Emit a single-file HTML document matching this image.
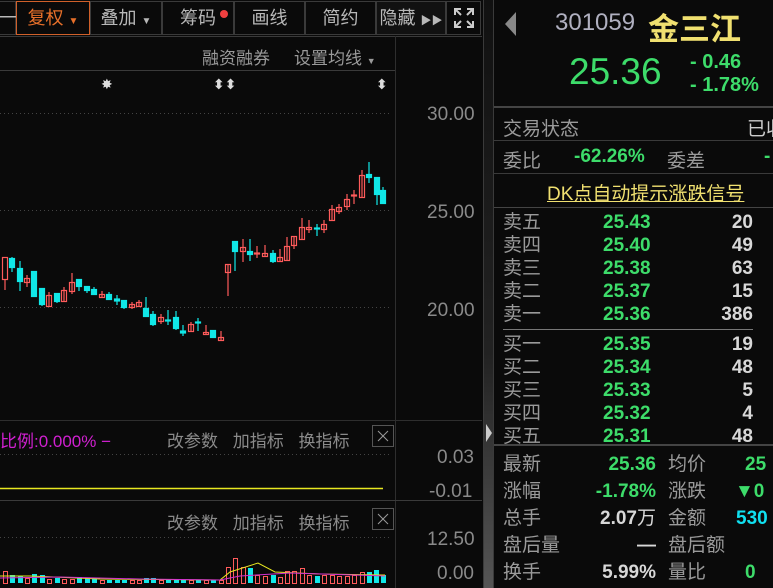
<!DOCTYPE html>
<html><head><meta charset="utf-8"><style>
*{margin:0;padding:0;box-sizing:border-box}
body{width:773px;height:588px;background:#0a0a0a;overflow:hidden;position:relative;font-family:"Liberation Sans","Noto Sans CJK SC",sans-serif;color:#a0a0a0}
.a{position:absolute;white-space:nowrap}
.tb{position:absolute;top:1px;height:34px;border:1px solid #3a3a3a;font-size:18px;color:#b8b8b8;text-align:center;line-height:33px}
.g{color:#3ddc6a;font-weight:bold}
.w{color:#d8d8d8;font-weight:bold}
.lbl{font-size:19px;color:#9a9a9a}
.hl{position:absolute;height:1px;background:#3a3a3a}
</style></head><body>
<div class="tb" style="left:-2px;width:18px">一</div>
<div class="tb" style="left:16px;width:74px;border-color:#d0602a;color:#e8702a">复权 <span style="font-size:10px">▼</span></div>
<div class="tb" style="left:90px;width:72px">叠加 <span style="font-size:10px">▼</span></div>
<div class="tb" style="left:162px;width:72px">筹码<span style="position:absolute;left:57px;top:8px;width:8px;height:8px;border-radius:50%;background:#f04040"></span></div>
<div class="tb" style="left:234px;width:71px">画线</div>
<div class="tb" style="left:305px;width:71px">简约</div>
<div class="tb" style="left:376px;width:70px;background:#111">隐藏 <span style="font-size:11px">▶▶</span></div>
<div class="tb" style="left:446px;width:35px">
<svg width="24" height="24" style="margin-top:4px" viewBox="0 0 24 24" fill="none" stroke="#ccc" stroke-width="2"><path d="M3 9V3h6M3 3l6 6M21 9V3h-6M21 3l-6 6M3 15v6h6M3 21l6-6M21 15v6h-6M21 21l-6-6"/></svg></div>
<div class="hl" style="left:0;top:36px;width:482px"></div>
<div class="a" style="left:202px;top:44px;font-size:17px;color:#9a9a9a">融资融券</div>
<div class="a" style="left:294px;top:44px;font-size:17px;color:#9a9a9a">设置均线 <span style="font-size:9px">▼</span></div>
<div class="hl" style="left:0;top:70px;width:395px"></div>
<div class="a" style="left:395px;top:36px;width:1px;height:552px;background:#2e2e2e"></div>
<div class="a" style="left:483px;top:0;width:11px;height:588px;background:linear-gradient(#111,#222 60%,#555);border-left:1px solid #3a3a3a;border-right:1px solid #3a3a3a"></div>
<div class="a" style="left:486px;top:424px;width:0;height:0;border-top:9px solid transparent;border-bottom:9px solid transparent;border-left:6px solid #ccc"></div>
<div class="a" style="left:427px;top:104px;font-size:19px;color:#8a8a8a">30.00</div>
<div class="a" style="left:427px;top:202px;font-size:19px;color:#8a8a8a">25.00</div>
<div class="a" style="left:427px;top:300px;font-size:19px;color:#8a8a8a">20.00</div>
<svg class="a" style="left:0;top:0" width="483" height="588">
<g stroke="#444" stroke-dasharray="1 3"><line x1="0" y1="113.5" x2="392" y2="113.5"/><line x1="0" y1="210.5" x2="392" y2="210.5"/><line x1="0" y1="307.5" x2="392" y2="307.5"/><line x1="0" y1="454.5" x2="392" y2="454.5"/><line x1="0" y1="537.5" x2="392" y2="537.5"/></g>
<g fill="#ddd" font-size="14" font-family="DejaVu Sans" font-weight="bold"><text x="101" y="89">✸</text><text x="213" y="89">⬍⬍</text><text x="376" y="89">⬍</text></g>
<g stroke="#ff5b5b" fill="none" stroke-width="1.2">
<path d="M5 279v11M27 275v12M49 292v14M64 287v14M72 273v21M102 291v6M132 302v7M139 300v7M161 314v10M191 322v9M206 325v9M221 331v10M228 264v32M243 239v23M257 246v12M265 245v11M280 249v12M287 237v23M294 236v13M302 218v21M309 220v13M324 220v13M332 205v15M339 204v10M347 194v16M354 190v14M362 170v28"/>
<rect x="2.5" y="257.5" width="5" height="22"/><rect x="24.5" y="278.5" width="5" height="4"/><rect x="46.5" y="295.5" width="5" height="11"/><rect x="61.5" y="290.5" width="5" height="11"/><rect x="69.5" y="282.5" width="5" height="9"/><rect x="99.5" y="294.5" width="5" height="3"/><rect x="129.5" y="304.5" width="5" height="3"/><rect x="136.5" y="302.5" width="5" height="4"/><rect x="158.5" y="317.5" width="5" height="4"/><rect x="188.5" y="324.5" width="5" height="7"/><rect x="203.5" y="332.5" width="5" height="2"/><rect x="218.5" y="337.5" width="5" height="3"/><rect x="225.5" y="264.5" width="5" height="8"/><rect x="240.5" y="247.5" width="5" height="4"/><rect x="254.5" y="253" width="5" height="1"/><rect x="262.5" y="253.5" width="5" height="3"/><rect x="277.5" y="257.5" width="5" height="4"/><rect x="284.5" y="246.5" width="5" height="14"/><rect x="291.5" y="236.5" width="5" height="9"/><rect x="299.5" y="227.5" width="5" height="12"/><rect x="306.5" y="227.5" width="5" height="2"/><rect x="321.5" y="224.5" width="5" height="5"/><rect x="329.5" y="209.5" width="5" height="11"/><rect x="336.5" y="207.5" width="5" height="4"/><rect x="344.5" y="199.5" width="5" height="7"/><rect x="351.5" y="195" width="5" height="1"/><rect x="359.5" y="175.5" width="5" height="22"/>
</g>
<g stroke="#10e8e8" fill="#10e8e8" stroke-width="1.2">
<path d="M12 257v15M20 261v30M42 288v18M57 293v10M79 279v12M87 286v7M94 287v8M109 292v8M117 295v10M124 300v9M146 297v20M153 311v15M168 310v15M176 311v19M183 325v11M198 318v13M213 330v8M235 241v30M250 239v22M273 250v13M317 224v12M369 162v21M377 177v28M383 187v16"/>
<rect x="9.5" y="258.5" width="5" height="9"/><rect x="17.5" y="268.5" width="5" height="13"/><rect x="31.5" y="271.5" width="5" height="25"/><rect x="39.5" y="288.5" width="5" height="16"/><rect x="54.5" y="293.5" width="5" height="8"/><rect x="76.5" y="279.5" width="5" height="7"/><rect x="84.5" y="286.5" width="5" height="4"/><rect x="91.5" y="289.5" width="5" height="5"/><rect x="106.5" y="294.5" width="5" height="5"/><rect x="114.5" y="299" width="5" height="2"/><rect x="121.5" y="300.5" width="5" height="7"/><rect x="143.5" y="308.5" width="5" height="8"/><rect x="150.5" y="314.5" width="5" height="10"/><rect x="165.5" y="320" width="5" height="1"/><rect x="173.5" y="317.5" width="5" height="11"/><rect x="180.5" y="331" width="5" height="2"/><rect x="195.5" y="322" width="5" height="1"/><rect x="210.5" y="330.5" width="5" height="7"/><rect x="232.5" y="241.5" width="5" height="10"/><rect x="247.5" y="251.5" width="5" height="3"/><rect x="270.5" y="253.5" width="5" height="8"/><rect x="314.5" y="228" width="5" height="1"/><rect x="366.5" y="174.5" width="5" height="3"/><rect x="374.5" y="177.5" width="5" height="17"/><rect x="380.5" y="190.5" width="5" height="13"/>
</g>
<line x1="0" y1="420.5" x2="482" y2="420.5" stroke="#2e2e2e"/>
<line x1="0" y1="488.5" x2="383" y2="488.5" stroke="#e8e820" stroke-width="1.5"/>
<line x1="0" y1="500.5" x2="482" y2="500.5" stroke="#3a3a3a"/>
<rect x="372.5" y="425.5" width="21" height="21" fill="none" stroke="#555"/><path d="M378 431l10 10M388 431l-10 10" stroke="#999"/>
<rect x="372.5" y="508.5" width="21" height="21" fill="none" stroke="#555"/><path d="M378 514l10 10M388 514l-10 10" stroke="#999"/>
<g fill="none" stroke="#ff5b5b"><rect x="3.5" y="571.5" width="4" height="12"/><rect x="25.5" y="578.5" width="4" height="5"/><rect x="47.5" y="579.5" width="4" height="4"/><rect x="62.5" y="579.5" width="4" height="4"/><rect x="70.5" y="579.5" width="4" height="4"/><rect x="100.5" y="580.5" width="4" height="3"/><rect x="130.5" y="580.5" width="4" height="3"/><rect x="137.5" y="580.5" width="4" height="3"/><rect x="159.5" y="580.5" width="4" height="3"/><rect x="189.5" y="580.5" width="4" height="3"/><rect x="204.5" y="580.5" width="4" height="3"/><rect x="219.5" y="580.5" width="4" height="3"/><rect x="226.5" y="567.5" width="4" height="16"/><rect x="233.5" y="558.5" width="4" height="25"/><rect x="241.5" y="567.5" width="4" height="16"/><rect x="255.5" y="575.5" width="4" height="8"/><rect x="263.5" y="576.5" width="4" height="7"/><rect x="278.5" y="577.5" width="4" height="6"/><rect x="285.5" y="571.5" width="4" height="12"/><rect x="292.5" y="571.5" width="4" height="12"/><rect x="300.5" y="568.5" width="4" height="15"/><rect x="307.5" y="575.5" width="4" height="8"/><rect x="322.5" y="575.5" width="4" height="8"/><rect x="330.5" y="575.5" width="4" height="8"/><rect x="337.5" y="576.5" width="4" height="7"/><rect x="345.5" y="576.5" width="4" height="7"/><rect x="352.5" y="575.5" width="4" height="8"/><rect x="360.5" y="572.5" width="4" height="11"/></g>
<g fill="#10e8e8"><rect x="10" y="575" width="5" height="8"/><rect x="18" y="576" width="5" height="7"/><rect x="32" y="574" width="5" height="9"/><rect x="40" y="575" width="5" height="8"/><rect x="55" y="578" width="5" height="5"/><rect x="77" y="577" width="5" height="6"/><rect x="85" y="578" width="5" height="5"/><rect x="92" y="578" width="5" height="5"/><rect x="107" y="580" width="5" height="3"/><rect x="115" y="580" width="5" height="3"/><rect x="122" y="580" width="5" height="3"/><rect x="144" y="578" width="5" height="5"/><rect x="151" y="578" width="5" height="5"/><rect x="166" y="580" width="5" height="3"/><rect x="174" y="580" width="5" height="3"/><rect x="181" y="580" width="5" height="3"/><rect x="196" y="580" width="5" height="3"/><rect x="211" y="580" width="5" height="3"/><rect x="248" y="568" width="5" height="15"/><rect x="271" y="575" width="5" height="8"/><rect x="315" y="576" width="5" height="7"/><rect x="367" y="572" width="5" height="11"/><rect x="374" y="570" width="5" height="13"/><rect x="381" y="575" width="5" height="8"/></g>
<path d="M0 576 L30 576 L100 579 L220 580 L230 572 L258 563 L275 572 L320 574 L385 575" stroke="#e8e820" fill="none"/>
<path d="M0 578 L60 577 L140 579 L220 580 L240 576 L290 573 L385 576" stroke="#d030d0" fill="none"/>
</svg>
<div class="a" style="left:0;top:427px;font-size:17px;color:#d020d0">比例:0.000% −</div>
<div class="a" style="left:167px;top:427px;font-size:17px;color:#8a8a8a;word-spacing:10px">改参数 加指标 换指标</div>
<div class="a" style="left:167px;top:509px;font-size:17px;color:#8a8a8a;word-spacing:10px">改参数 加指标 换指标</div>
<div class="a" style="left:437px;top:447px;font-size:19px;color:#8a8a8a">0.03</div>
<div class="a" style="left:429px;top:481px;font-size:19px;color:#8a8a8a">-0.01</div>
<div class="a" style="left:427px;top:529px;font-size:19px;color:#8a8a8a">12.50</div>
<div class="a" style="left:437px;top:563px;font-size:19px;color:#8a8a8a">0.00</div>
<div class="a" style="left:505px;top:12px;width:0;height:0;border-top:12px solid transparent;border-bottom:12px solid transparent;border-right:11px solid #888"></div>
<div class="a" style="left:555px;top:9px;font-size:24px;color:#b0b0c0">301059</div>
<div class="a" style="left:648px;top:4px;font-size:31px;color:#f0e070;font-weight:bold">金三江</div>
<div class="a g" style="left:569px;top:51px;font-size:37px;font-weight:normal">25.36</div>
<div class="a g" style="left:690px;top:51px;font-size:20px">- 0.46</div>
<div class="a g" style="left:690px;top:74px;font-size:20px">- 1.78%</div>
<div class="hl" style="left:494px;top:106px;width:279px;background:#444;height:2px"></div>
<div class="a lbl" style="left:503px;top:114px">交易状态</div>
<div class="a lbl" style="left:747px;top:114px;color:#ccc">已收</div>
<div class="hl" style="left:494px;top:140px;width:279px"></div>
<div class="a lbl" style="left:503px;top:146px">委比</div>
<div class="a g" style="left:574px;top:146px;font-size:19px">-62.26%</div>
<div class="a lbl" style="left:667px;top:146px">委差</div>
<div class="a g" style="left:764px;top:146px;font-size:19px">-</div>
<div class="hl" style="left:494px;top:173px;width:279px"></div>
<div class="a" style="left:547px;top:179px;font-size:19px;color:#f0e070;text-decoration:underline">DK点自动提示涨跌信号</div>
<div class="hl" style="left:494px;top:207px;width:279px;background:#444"></div>
<div style="position:absolute;left:503px;top:211px;width:260px;font-size:19px;line-height:23px">
<div style="display:flex"><span class="lbl" style="width:100px">卖五</span><span class="g" style="width:65px">25.43</span><span class="w" style="width:85px;text-align:right">20</span></div>
<div style="display:flex"><span class="lbl" style="width:100px">卖四</span><span class="g" style="width:65px">25.40</span><span class="w" style="width:85px;text-align:right">49</span></div>
<div style="display:flex"><span class="lbl" style="width:100px">卖三</span><span class="g" style="width:65px">25.38</span><span class="w" style="width:85px;text-align:right">63</span></div>
<div style="display:flex"><span class="lbl" style="width:100px">卖二</span><span class="g" style="width:65px">25.37</span><span class="w" style="width:85px;text-align:right">15</span></div>
<div style="display:flex"><span class="lbl" style="width:100px">卖一</span><span class="g" style="width:65px">25.36</span><span class="w" style="width:85px;text-align:right">386</span></div>
<div style="height:1px;background:#777;margin:3px 0;width:250px"></div>
<div style="display:flex"><span class="lbl" style="width:100px">买一</span><span class="g" style="width:65px">25.35</span><span class="w" style="width:85px;text-align:right">19</span></div>
<div style="display:flex"><span class="lbl" style="width:100px">买二</span><span class="g" style="width:65px">25.34</span><span class="w" style="width:85px;text-align:right">48</span></div>
<div style="display:flex"><span class="lbl" style="width:100px">买三</span><span class="g" style="width:65px">25.33</span><span class="w" style="width:85px;text-align:right">5</span></div>
<div style="display:flex"><span class="lbl" style="width:100px">买四</span><span class="g" style="width:65px">25.32</span><span class="w" style="width:85px;text-align:right">4</span></div>
<div style="display:flex"><span class="lbl" style="width:100px">买五</span><span class="g" style="width:65px">25.31</span><span class="w" style="width:85px;text-align:right">48</span></div>
</div>
<div class="hl" style="left:494px;top:444px;width:279px;background:#444;height:2px"></div>
<div style="position:absolute;left:503px;top:451px;width:300px;font-size:19px;line-height:27px">
<div style="display:flex"><span class="lbl" style="width:75px">最新</span><span class="g" style="width:78px;text-align:right">25.36</span><span class="lbl" style="width:89px;padding-left:12px">均价</span><span class="g">25</span></div>
<div style="display:flex"><span class="lbl" style="width:75px">涨幅</span><span class="g" style="width:78px;text-align:right">-1.78%</span><span class="lbl" style="width:89px;padding-left:12px">涨跌</span><span class="g" style="margin-left:-10px">▼0</span></div>
<div style="display:flex"><span class="lbl" style="width:75px">总手</span><span class="w" style="width:78px;text-align:right">2.07<span style="font-weight:normal">万</span></span><span class="lbl" style="width:89px;padding-left:12px">金额</span><span style="color:#10e0f0;font-weight:bold;margin-left:-9px">530</span></div>
<div style="display:flex"><span class="lbl" style="width:75px">盘后量</span><span class="w" style="width:78px;text-align:right">—</span><span class="lbl" style="width:89px;padding-left:12px">盘后额</span></div>
<div style="display:flex"><span class="lbl" style="width:75px">换手</span><span class="w" style="width:78px;text-align:right">5.99%</span><span class="lbl" style="width:89px;padding-left:12px">量比</span><span class="g">0</span></div>
</div>
</body></html>
